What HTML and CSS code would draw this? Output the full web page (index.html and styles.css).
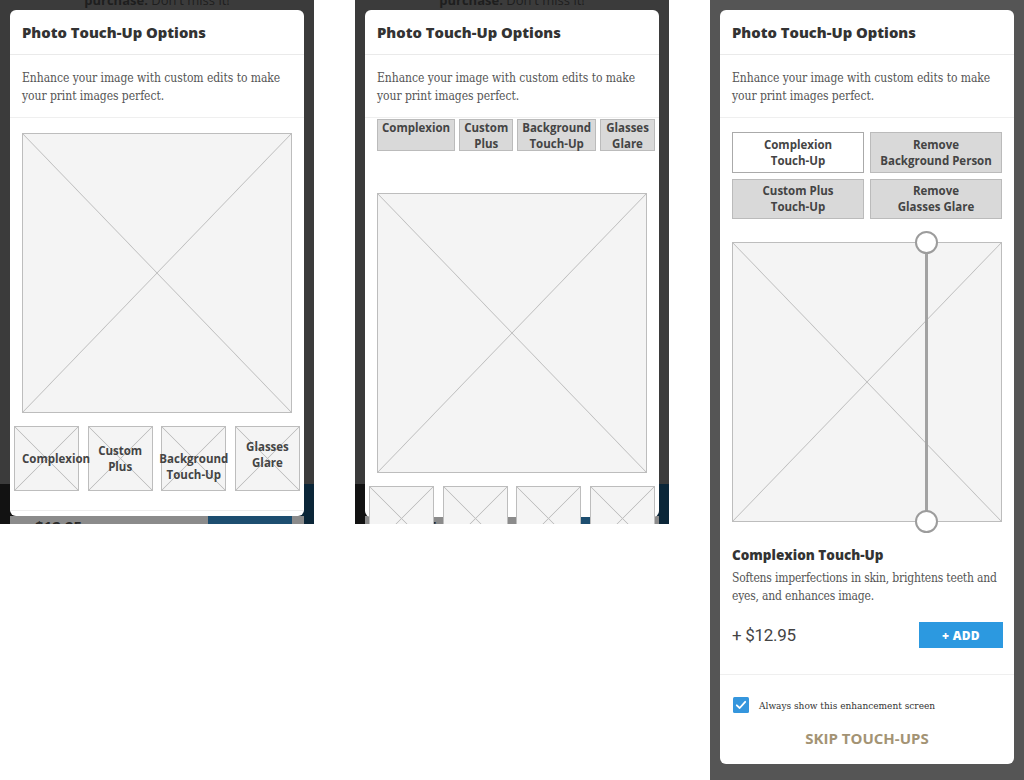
FILE: index.html
```html
<!DOCTYPE html>
<html lang="en">
<head>
  <meta charset="UTF-8">
  <title>Photo Touch-Up Options</title>
  <link rel="stylesheet" href="styles.css">
</head>
<body>
  <div class="board">

    <!-- version 1: big preview, thumbnails below -->
    <section class="screen">
      <div class="page">
        <p class="page-promo"><b>purchase.</b> Don't miss it!</p>
        <div class="page-footer">
          <div class="page-sheet"><span class="page-price">$12.95</span><span class="page-btn"></span></div>
        </div>
      </div>
      <div class="modal modal-float">
        <header class="modal-head"><h2>Photo Touch-Up Options</h2></header>
        <p class="modal-intro">Enhance your image with custom edits to make your print images perfect.</p>
        <div class="ph ph-main first"></div>
        <div class="thumbs">
          <div class="ph thumb wide">Complexion</div>
          <div class="ph thumb">Custom<br>Plus</div>
          <div class="ph thumb low">Background<br>Touch-Up</div>
          <div class="ph thumb high">Glasses<br>Glare</div>
        </div>
        <div class="modal-end"></div>
      </div>
    </section>

    <!-- version 2: tabs on top -->
    <section class="screen">
      <div class="page">
        <p class="page-promo"><b>purchase.</b> Don't miss it!</p>
        <div class="page-footer">
          <div class="page-sheet"><span class="page-price">$12.95</span><span class="page-btn"></span></div>
        </div>
      </div>
      <div class="modal modal-float tall">
        <header class="modal-head"><h2>Photo Touch-Up Options</h2></header>
        <p class="modal-intro">Enhance your image with custom edits to make your print images perfect.</p>
        <div class="tabs">
          <div class="tab">Complexion</div>
          <div class="tab">Custom<br>Plus</div>
          <div class="tab">Background<br>Touch-Up</div>
          <div class="tab">Glasses<br>Glare</div>
        </div>
        <div class="ph ph-main spaced"></div>
        <div class="thumbs">
          <div class="ph thumb"></div>
          <div class="ph thumb"></div>
          <div class="ph thumb"></div>
          <div class="ph thumb"></div>
        </div>
      </div>
    </section>

    <!-- version 3: option grid with before/after slider -->
    <section class="screen screen-full">
      <div class="modal">
        <header class="modal-head"><h2>Photo Touch-Up Options</h2></header>
        <p class="modal-intro">Enhance your image with custom edits to make your print images perfect.</p>
        <div class="options">
          <div class="option active">Complexion<br>Touch-Up</div>
          <div class="option">Remove<br>Background Person</div>
          <div class="option">Custom Plus<br>Touch-Up</div>
          <div class="option">Remove<br>Glasses Glare</div>
        </div>
        <div class="ph ph-main compare">
          <div class="slider">
            <span class="knob knob-top"></span>
            <span class="knob knob-bottom"></span>
          </div>
        </div>
        <div class="detail">
          <h3>Complexion Touch-Up</h3>
          <p>Softens imperfections in skin, brightens teeth and eyes, and enhances image.</p>
          <div class="buy">
            <span class="price">+ $12.95</span>
            <button class="add">+ ADD</button>
          </div>
        </div>
        <div class="modal-foot">
          <label class="always">
            <svg width="16" height="16" viewBox="0 0 16 16">
              <rect x="0" y="0" width="16" height="16" rx="1.5" fill="#3596dd"/>
              <path d="M3.8 8.3 L6.7 11 L12.2 4.8" fill="none" stroke="#fff" stroke-width="1.8" stroke-linecap="round" stroke-linejoin="round"/>
            </svg>
            Always show this enhancement screen
          </label>
          <a class="skip">SKIP TOUCH-UPS</a>
        </div>
      </div>
    </section>

  </div>
</body>
</html>
```

FILE: styles.css
```css
body {
  margin: 0;
  background: #fff;
  font-family: "Open Sans", "Liberation Sans", sans-serif;
  color: #333;
}
.board {
  display: flex;
  gap: 41px;
  align-items: flex-start;
}
.screen {
  position: relative;
  width: 314px;
  height: 524px;
  overflow: hidden;
  background: #3b3b3b;
  flex-shrink: 0;
}
.screen-full {
  height: 780px;
  background: #555;
  padding: 10px;
  box-sizing: border-box;
}

/* page behind the overlay */
.page {
  height: 100%;
  display: flex;
  flex-direction: column;
}
.page-promo {
  margin: -8px 0 0;
  text-align: center;
  font-size: 13px;
  line-height: 16px;
  color: #1e1e1e;
}
.page-footer {
  margin-top: auto;
  height: 40px;
  background: linear-gradient(90deg, #121212 0 300px, #0b2638 300px);
}
.page-sheet {
  display: flex;
  height: 8px;
  margin: 32px 10px 0;
  background: #8b8b8b;
  overflow: hidden;
}
.page-price {
  width: 198px;
  padding-left: 25px;
  box-sizing: border-box;
  font-size: 15px;
  font-weight: 700;
  line-height: 20px;
  color: #2a2a2a;
}
.page-btn {
  width: 84px;
  background: #1d4e70;
}

/* modal */
.modal {
  width: 294px;
  height: 754px;
  background: #fff;
  border-radius: 6px;
}
.modal-float {
  position: absolute;
  top: 10px;
  left: 10px;
  height: 506px;
}
.modal-float.tall {
  height: 507px;
}
.modal-head {
  height: 45px;
  box-sizing: border-box;
  padding: 0 12px;
  display: flex;
  align-items: center;
  border-bottom: 1px solid #eaeaea;
}
.modal-head h2 {
  margin: 0;
  font-size: 14.8px;
  font-weight: 800;
  color: #333;
}
.modal-intro {
  margin: 0;
  padding: 14px 12px 12px;
  font-family: "DejaVu Serif", "Liberation Serif", serif;
  font-stretch: condensed;
  font-size: 12px;
  line-height: 18px;
  letter-spacing: -0.05px;
  color: #555;
  border-bottom: 1px solid #efefef;
}

/* image placeholders */
.ph {
  box-sizing: border-box;
  background-color: #f4f4f4;
  border: 1px solid #bdbdbd;
  background-image:
    linear-gradient(to top right, transparent calc(50% - 0.8px), #c2c2c2 50%, transparent calc(50% + 0.8px)),
    linear-gradient(to bottom right, transparent calc(50% - 0.8px), #c2c2c2 50%, transparent calc(50% + 0.8px));
}
.ph-main {
  width: 270px;
  height: 280px;
  margin: 0 12px;
}
.ph-main.first {
  margin-top: 15px;
}
.ph-main.spaced {
  margin-top: 42px;
}
.thumbs {
  display: flex;
  justify-content: space-between;
  padding: 0 4px;
  margin-top: 13px;
}
.thumb {
  position: relative;
  width: 65px;
  height: 65px;
  display: flex;
  align-items: center;
  justify-content: center;
  text-align: center;
  font-size: 11.5px;
  font-weight: 700;
  line-height: 16px;
  color: #444;
  white-space: nowrap;
}
.thumb.wide {
  z-index: 1;
  justify-content: flex-start;
  padding-left: 7px;
}
.thumb.low {
  padding-top: 16px;
}
.thumb.high {
  padding-bottom: 8px;
}
.modal-end {
  margin-top: 19px;
  border-top: 1px solid #ececec;
}

/* tabs */
.tabs {
  display: flex;
  gap: 4px;
  padding: 0 12px;
  margin-top: 1px;
}
.tab {
  height: 32px;
  box-sizing: border-box;
  padding: 0 4px;
  background: #d9d9d9;
  border: 1px solid #bbb;
  text-align: center;
  font-size: 11.5px;
  font-weight: 700;
  line-height: 16px;
  color: #444;
}
.tab:last-child {
  padding: 0 5px;
}

/* option grid */
.options {
  display: grid;
  grid-template-columns: 132px 132px;
  gap: 6px;
  padding: 14px 12px 0;
}
.option {
  height: 41px;
  box-sizing: border-box;
  display: flex;
  align-items: center;
  justify-content: center;
  text-align: center;
  background: #d9d9d9;
  border: 1px solid #bbb;
  font-size: 11.5px;
  font-weight: 700;
  line-height: 16px;
  color: #444;
}
.option.active {
  background: #fff;
  border-color: #aaa;
}
.option:nth-child(n+3) {
  height: 40px;
}
.compare {
  position: relative;
  margin-top: 23px;
}
.slider {
  position: absolute;
  top: 0;
  bottom: 0;
  left: 192px;
  width: 3px;
  background: #a2a2a2;
}
.knob {
  position: absolute;
  left: -10px;
  width: 19px;
  height: 19px;
  border: 2px solid #9c9c9c;
  border-radius: 50%;
  background: #fff;
}
.knob-top {
  top: -12px;
}
.knob-bottom {
  bottom: -12px;
}

/* selected option details */
.detail {
  padding: 23px 12px 26px;
  border-bottom: 1px solid #efefef;
}
.detail h3 {
  margin: 0;
  font-size: 13.5px;
  font-weight: 800;
  line-height: 20px;
  color: #333;
}
.detail p {
  margin: 4px 0 0;
  font-family: "DejaVu Serif", "Liberation Serif", serif;
  font-stretch: condensed;
  font-size: 12px;
  line-height: 18px;
  letter-spacing: -0.2px;
  color: #555;
}
.buy {
  display: flex;
  justify-content: space-between;
  align-items: center;
  margin-top: 17px;
}
.price {
  font-family: Roboto, "Liberation Sans", sans-serif;
  font-size: 17px;
  letter-spacing: -0.3px;
  color: #444;
}
.add {
  width: 84px;
  height: 26px;
  margin-right: -1px;
  border: none;
  background: #2c99e0;
  color: #fff;
  font-family: "Open Sans", sans-serif;
  font-size: 12px;
  font-weight: 800;
  letter-spacing: 0.3px;
  cursor: pointer;
}
.modal-foot {
  padding: 22px 12px 15px;
}
.always {
  display: flex;
  align-items: center;
  gap: 10px;
  margin-left: 1px;
  font-family: "DejaVu Serif", "Liberation Serif", serif;
  font-stretch: condensed;
  font-size: 10px;
  color: #333;
}
.skip {
  display: block;
  margin-top: 15px;
  text-align: center;
  font-size: 15px;
  font-weight: 700;
  line-height: 20px;
  color: #a39374;
}
```
